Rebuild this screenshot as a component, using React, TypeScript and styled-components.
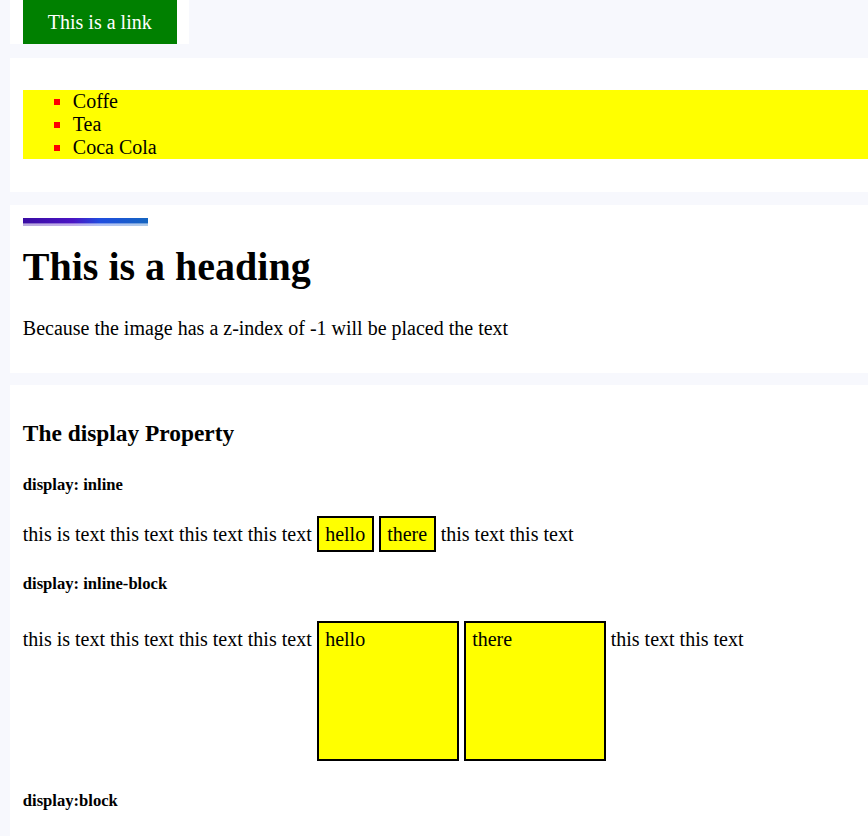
import styled, { createGlobalStyle } from 'styled-components';

const GlobalStyle = createGlobalStyle`
  html, body {
    margin: 0;
    padding: 0;
    background: #f7f8fd;
    font-family: "Liberation Serif", "Times New Roman", serif;
    font-size: 20px;
    color: #000;
    overflow: hidden;
  }
`;

// the sections run past the right edge of the window
const Page = styled.div`
  width: calc(100% + 40px);
  padding-left: 10px;
  box-sizing: border-box;
`;

const Section = styled.section<{ $fit?: boolean; $pad?: string; $gap?: number }>`
  position: relative;
  background: #fff;
  padding: ${({ $pad }) => $pad ?? '12px 12.8px'};
  margin-bottom: ${({ $gap }) => $gap ?? 13}px;
  width: ${({ $fit }) => ($fit ? 'fit-content' : 'auto')};
`;

const LinkButton = styled.a`
  display: inline-block;
  padding: 0 25px;
  line-height: 44px;
  background: #008000;
  color: #fff;
  text-decoration: none;
  vertical-align: top;
`;

const DrinkList = styled.ul`
  margin: 20px 0;
  padding-left: 50px;
  background: #ff0;
  list-style: square;

  li::marker {
    color: #f00;
  }
`;

// stands in for the picture sitting behind the heading
const Banner = styled.div`
  position: absolute;
  top: 13px;
  left: 12.8px;
  width: 125px;
  height: 8px;
  background:
    linear-gradient(180deg, transparent 0 5px, rgba(255, 255, 255, 0.4) 5px 6px, rgba(255, 255, 255, 0.65) 6px 100%),
    linear-gradient(90deg, #3a0ca3 0%, #4a14c4 40%, #1f4ddf 62%, #1565c0 100%);
`;

const Heading = styled.h1`
  margin: 0.67em 0;
  font-size: 2em;
`;

const Text = styled.p`
  margin: 1em 0;
`;

const SubHeading = styled.h3`
  margin: 1em 0;
  font-size: 1.17em;
`;

const Label = styled.h5`
  margin: 1.67em 0;
  font-size: 0.83em;
`;

const Chip = styled.span<{ $block?: boolean }>`
  display: ${({ $block }) => ($block ? 'inline-block' : 'inline')};
  box-sizing: border-box;
  padding: 5px 6.5px;
  border: 2px solid #000;
  background: #ff0;
  ${({ $block }) => $block && 'width: 142px; height: 140px; margin-bottom: 2px;'}
`;

const App = () => {
  return (
    <>
      <GlobalStyle />
      <Page>
        <Section $fit $pad="0 12.8px" $gap={14}>
          <LinkButton href="#">This is a link</LinkButton>
        </Section>

        <Section $pad="12px 12.8px 12.5px">
          <DrinkList>
            <li>Coffe</li>
            <li>Tea</li>
            <li>Coca Cola</li>
          </DrinkList>
        </Section>

        <Section $pad="12px 12.8px 13px" $gap={12}>
          <Banner />
          <Heading>This is a heading</Heading>
          <Text>Because the image has a z-index of -1 will be placed the text</Text>
        </Section>

        <Section>
          <SubHeading>The display Property</SubHeading>
          <Label>display: inline</Label>
          <Text>
            this is text this text this text this text <Chip>hello</Chip> <Chip>there</Chip> this text this text
          </Text>
          <Label>display: inline-block</Label>
          <Text>
            this is text this text this text this text <Chip $block>hello</Chip> <Chip $block>there</Chip> this text this text
          </Text>
          <Label>display:block</Label>
        </Section>
      </Page>
    </>
  );
};

export default App;
